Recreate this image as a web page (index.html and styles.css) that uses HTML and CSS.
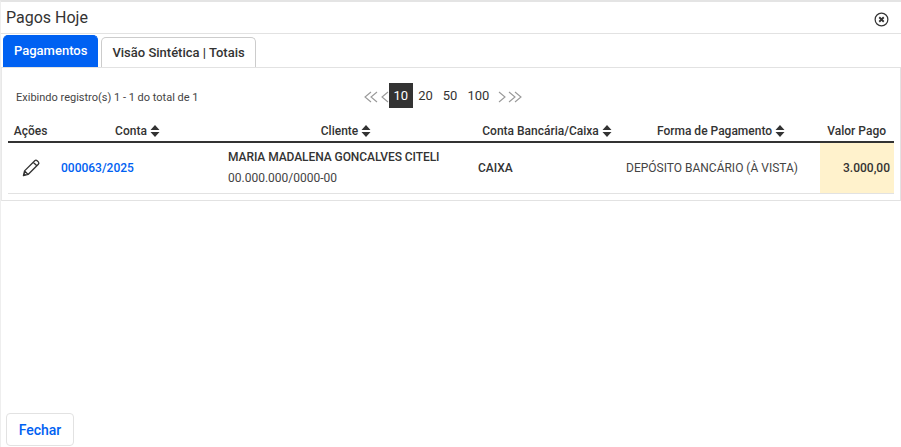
FILE: index.html
```html
<!DOCTYPE html>
<html lang="pt-BR">
<head>
<meta charset="utf-8">
<title>Pagos Hoje</title>
<link rel="stylesheet" href="styles.css">
</head>
<body>
<div class="modal">
  <header class="modal-head">
    <h1 class="modal-title">Pagos Hoje</h1>
    <svg class="close-icon" viewBox="0 0 16 16" width="15" height="15" aria-label="Fechar">
      <circle cx="8" cy="8" r="6.8" fill="none" stroke="#333" stroke-width="1.3"/>
      <path d="M5.6 5.6l4.8 4.8M10.4 5.6l-4.8 4.8" stroke="#333" stroke-width="1.9" fill="none"/>
    </svg>
  </header>
  <nav class="tabs">
    <a class="tab tab-active">Pagamentos</a>
    <a class="tab">Visão Sintética | Totais</a>
  </nav>
  <section class="panel">
    <div class="toolbar">
      <div class="info">Exibindo registro(s) 1 - 1 do total de 1</div>
      <div class="pager">
        <svg class="pg-icon" viewBox="0 0 14 14" width="14" height="14"><path d="M7 2L1 7l6 5M13 2L7 7l6 5" fill="none" stroke="#999" stroke-width="1.1"/></svg>
        <svg class="pg-icon sgl" viewBox="0 0 8 14" width="8" height="14"><path d="M7 2L1 7l6 5" fill="none" stroke="#999" stroke-width="1.1"/></svg>
        <span class="pg pg-on">10</span>
        <span class="pg">20</span>
        <span class="pg">50</span>
        <span class="pg">100</span>
        <svg class="pg-icon sgl-r" viewBox="0 0 8 14" width="8" height="14"><path d="M1 2l6 5-6 5" fill="none" stroke="#999" stroke-width="1.1"/></svg>
        <svg class="pg-icon dbl-r" viewBox="0 0 14 14" width="14" height="14"><path d="M1 2l6 5-6 5M7 2l6 5-6 5" fill="none" stroke="#999" stroke-width="1.1"/></svg>
      </div>
    </div>
    <table class="grid">
      <colgroup>
        <col class="c1"><col class="c2"><col class="c3"><col class="c4"><col class="c5"><col class="c6">
      </colgroup>
      <thead>
        <tr>
          <th>Ações</th>
          <th class="th-shift">Conta <svg class="sort" viewBox="0.5 0 9 12" width="10" height="12"><path d="M5 0l4.5 5H.5zM5 12L.5 7h9z" fill="#333"/></svg></th>
          <th class="th-shift">Cliente <svg class="sort" viewBox="0.5 0 9 12" width="10" height="12"><path d="M5 0l4.5 5H.5zM5 12L.5 7h9z" fill="#333"/></svg></th>
          <th class="th-shift">Conta Bancária/Caixa <svg class="sort" viewBox="0.5 0 9 12" width="10" height="12"><path d="M5 0l4.5 5H.5zM5 12L.5 7h9z" fill="#333"/></svg></th>
          <th>Forma de Pagamento <svg class="sort" viewBox="0.5 0 9 12" width="10" height="12"><path d="M5 0l4.5 5H.5zM5 12L.5 7h9z" fill="#333"/></svg></th>
          <th class="th-right">Valor Pago</th>
        </tr>
      </thead>
      <tbody>
        <tr>
          <td class="td-action">
            <svg viewBox="0 0 18 18" width="20" height="20"><path d="M2.2 15.8l1-4.2L12.4 2.4a1.5 1.5 0 0 1 2.1 0l1.1 1.1a1.5 1.5 0 0 1 0 2.1L6.4 14.8zM3.2 11.6l3.2 3.2M11 3.8l3.2 3.2" fill="none" stroke="#333" stroke-width="1.2" stroke-linejoin="round"/><path d="M2.2 15.8l.6-2.6 2 2z" fill="#333"/></svg>
          </td>
          <td class="td-link">000063/2025</td>
          <td class="td-client">
            <div class="client-name">MARIA MADALENA GONCALVES CITELI</div>
            <div class="client-doc">00.000.000/0000-00</div>
          </td>
          <td class="td-strong">CAIXA</td>
          <td class="td-plain">DEPÓSITO BANCÁRIO (À VISTA)</td>
          <td class="td-value">3.000,00</td>
        </tr>
      </tbody>
    </table>
  </section>
  <footer class="modal-foot">
    <button class="btn" type="button">Fechar</button>
  </footer>
</div>
</body>
</html>
```
FILE: styles.css
```css
* { box-sizing: border-box; }
html, body { margin: 0; height: 100%; }
body {
  font-family: Roboto, "Liberation Sans", sans-serif;
  color: #333;
  background: #fff;
  overflow: hidden;
}
.modal {
  height: 447px;
  display: flex;
  flex-direction: column;
  border-top: 2px solid #e4e4e4;
  border-left: 1px solid #eee;
}
.modal-head {
  height: 32px;
  flex: none;
  display: flex;
  align-items: center;
  justify-content: space-between;
  padding: 0 12px 0 5px;
  border-bottom: 1px solid #e2e2e2;
}
.modal-title {
  margin: 0;
  font-size: 16px;
  font-weight: 400;
  color: #333;
}
.close-icon { display: block; position: relative; top: 2px; }
.tabs {
  height: 33px;
  flex: none;
  display: flex;
  align-items: flex-end;
  gap: 3px;
  padding: 0 0 0 2px;
}
.tab {
  height: 30px;
  padding: 0 10px;
  display: flex;
  align-items: center;
  font-size: 13px;
  font-weight: 500;
  color: #333;
  border: 1px solid #ccc;
  border-bottom: 0;
  border-radius: 5px 5px 0 0;
}
.tab-active {
  height: 32px;
  padding: 0 10px 3px;
  background: #0061f2;
  border-color: #0061f2;
  color: #fff;
}
.panel {
  flex: none;
  height: 134px;
  padding: 0 6px;
  border: 1px solid #e2e2e2;
  border-left-color: #e8e8e8;
}
.toolbar {
  height: 55px;
  display: flex;
  padding-top: 15px;
}
.info {
  margin: 8px 0 0 8px;
  width: 348px;
  flex: none;
  font-size: 11px;
  line-height: 14px;
  color: #444;
}
.pager {
  display: flex;
  align-items: flex-start;
  font-size: 13px;
  color: #333;
  height: 25px;
}
.pg-icon { margin-top: 7px; flex: none; }
.pg-icon.sgl { margin-left: 3px; }
.pg-icon.sgl-r { margin-left: 4px; }
.pg-icon.dbl-r { margin-left: 2px; }
.pg {
  height: 25px;
  line-height: 26px;
  padding: 0 5px;
}
.pg-on { background: #333; color: #fff; padding: 0 5px 0 4.5px; }
.grid {
  width: 886px;
  table-layout: fixed;
  border-collapse: collapse;
}
.c1 { width: 45px; }
.c2 { width: 167px; }
.c3 { width: 250px; }
.c4 { width: 152px; }
.c5 { width: 198px; }
.c6 { width: 74px; }
.grid th {
  height: 19px;
  padding: 0 0 2px;
  font-size: 12px;
  font-weight: 500;
  color: #333;
  text-align: center;
  white-space: nowrap;
  border-bottom: 2px solid #333;
}
.grid th.th-shift { padding-left: 2px; }
.grid th.th-right { text-align: right; padding-right: 8px; }
.sort { vertical-align: -2px; }
.grid td {
  height: 51px;
  padding: 0 0 0 8px;
  font-size: 12px;
  border-bottom: 1px solid #e2e2e2;
  vertical-align: middle;
  white-space: nowrap;
}
.grid td.td-action { padding: 0 0 0 13px; }
.td-action svg { display: block; }
.grid td.td-link { color: #0061f2; font-weight: 500; }
.grid td.td-client { vertical-align: top; padding-top: 7px; }
.client-name { font-weight: 500; line-height: 14px; letter-spacing: -0.07px; }
.client-doc { line-height: 14px; margin-top: 7px; color: #444; }
.grid td.td-strong { font-weight: 500; }
.grid td.td-plain { padding-left: 4px; color: #444; }
.grid td.td-value {
  background: #fff2cc;
  text-align: right;
  padding: 0 4px 0 0;
  font-weight: 500;
}
.modal-foot {
  flex: 1;
  display: flex;
  align-items: flex-end;
  padding: 0 0 1px 5px;
}
.btn {
  width: 68px;
  height: 33px;
  background: #fff;
  border: 1px solid #e2e2e2;
  border-radius: 4px;
  color: #0061f2;
  font: 500 14px Roboto, "Liberation Sans", sans-serif;
}
```
